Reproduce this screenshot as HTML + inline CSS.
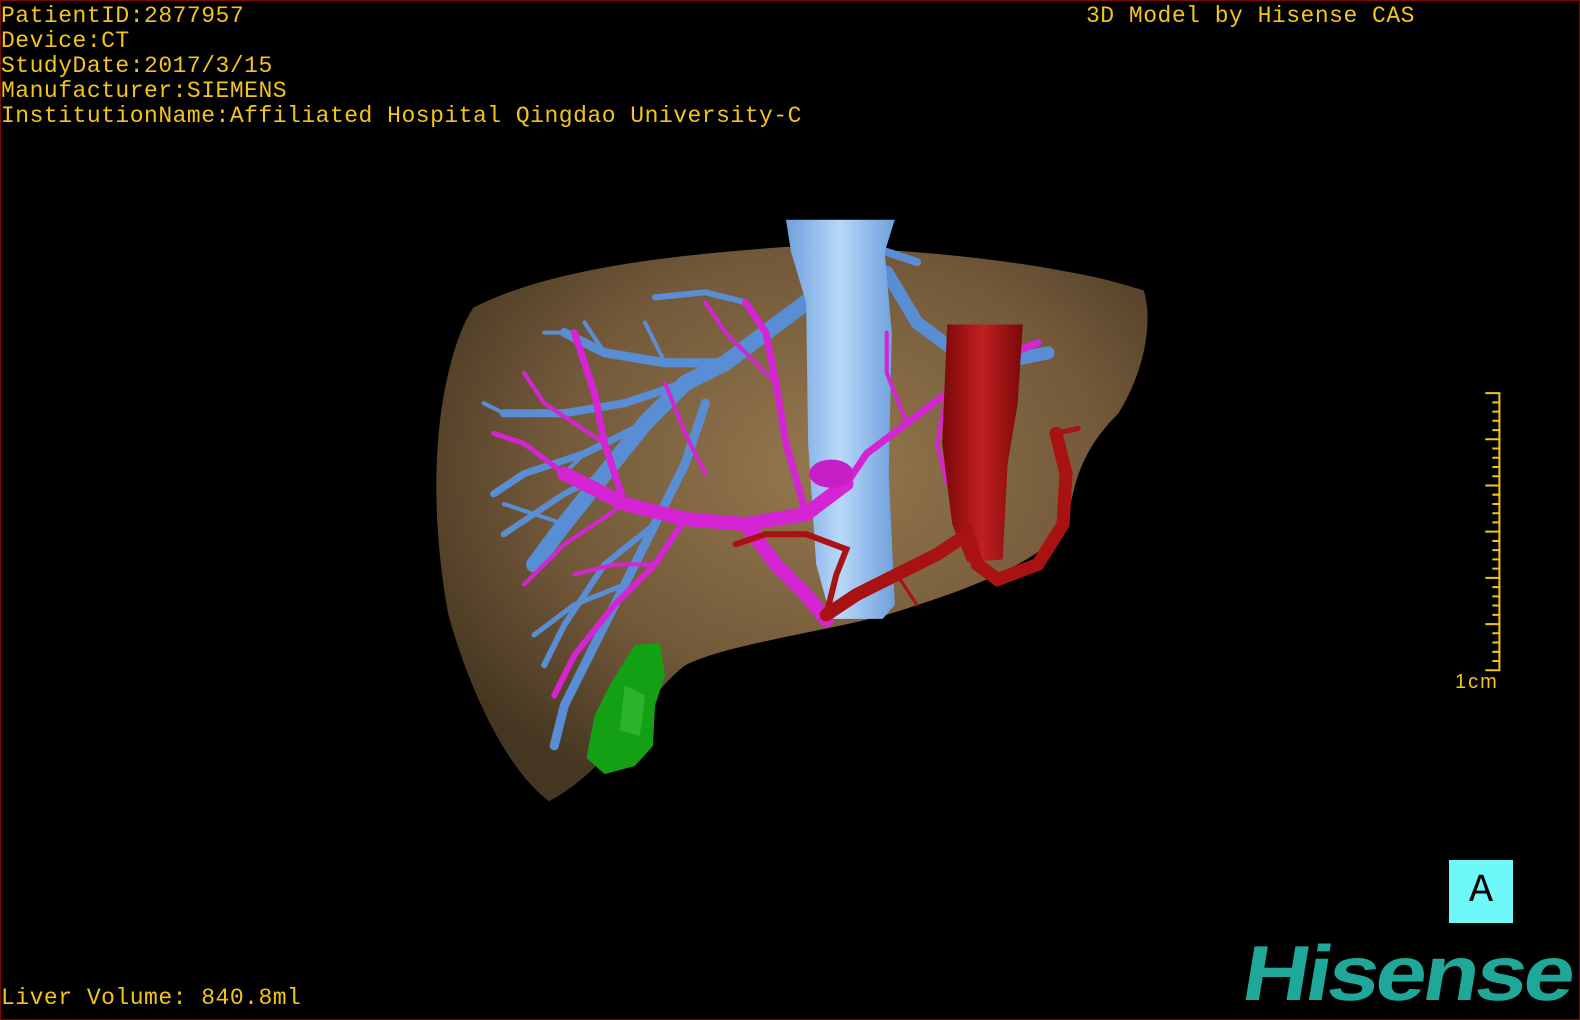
<!DOCTYPE html>
<html><head><meta charset="utf-8"><style>
html,body{margin:0;padding:0;background:#000;}
body{width:1580px;height:1020px;position:relative;overflow:hidden;}
.frame{position:absolute;left:0;top:0;width:1578px;height:1018px;border:1px solid #7a0a0a;}
.t{position:absolute;font-family:"Liberation Mono",monospace;color:#f2c41c;font-size:23px;line-height:25px;white-space:pre;letter-spacing:0.5px;}
svg{position:absolute;left:0;top:0;}
</style></head><body>
<svg width="1580" height="1020" viewBox="0 0 1568 1012" preserveAspectRatio="none">
<defs>
<radialGradient id="lg" cx="0.55" cy="0.4" r="0.65">
<stop offset="0" stop-color="#94784e"/><stop offset="0.6" stop-color="#73593a"/><stop offset="1" stop-color="#453621"/>
</radialGradient>
<linearGradient id="ivc" x1="0" x2="1"><stop offset="0" stop-color="#6f9fdc"/><stop offset="0.5" stop-color="#b8d8f8"/><stop offset="1" stop-color="#6f9fdc"/></linearGradient>
<linearGradient id="ao" x1="0" x2="1"><stop offset="0" stop-color="#7a0808"/><stop offset="0.5" stop-color="#c02020"/><stop offset="1" stop-color="#7a0808"/></linearGradient>
</defs>
<path d="M470,305 C540,270 640,255 780,245 C880,245 1000,255 1100,278 L1135,288 C1145,320 1135,370 1110,410 C1080,440 1065,470 1060,520 C1030,560 960,585 880,610 C800,630 720,640 680,660 C640,690 610,760 545,795 C510,770 470,700 445,610 C430,530 428,440 445,370 C452,340 460,320 470,305 Z" fill="url(#lg)"/>
<g fill="none" stroke="#5a8ed4" stroke-linecap="round">
<path d="M800,300 L760,330 L720,360 L680,380 L640,420 L600,470 L560,520 L530,560" stroke-width="16"/>
<path d="M720,360 L660,360 L600,350 L560,330" stroke-width="9"/>
<path d="M680,380 L620,400 L560,410 L500,410" stroke-width="8"/>
<path d="M640,420 L580,450 L520,470 L490,490" stroke-width="7"/>
<path d="M600,470 L560,490 L500,530" stroke-width="6"/>
<path d="M700,400 L680,460 L650,520 L620,580 L590,640 L560,700 L550,740" stroke-width="9"/>
<path d="M650,520 L600,560 L560,620 L540,660" stroke-width="6"/>
<path d="M760,330 L740,300 L700,290 L650,295" stroke-width="6"/>
<path d="M620,580 L570,600 L530,630" stroke-width="5"/>
<path d="M880,270 L910,320 L950,350 L990,360 L1040,350" stroke-width="13"/>
<path d="M950,350 L970,400 L960,440" stroke-width="7"/>
<path d="M880,250 L910,260" stroke-width="8"/>
<path d="M560,330 L540,330 M500,410 L480,400 M560,520 L500,500 M580,450 L560,470 M660,360 L640,320 M600,350 L580,320" stroke-width="4"/>
</g>
<path d="M780,218 L888,218 L878,250 L885,330 L882,470 L888,600 L876,614 L825,614 L810,560 L802,440 L800,300 L785,250 Z" fill="url(#ivc)"/>
<g fill="none" stroke="#d424d4" stroke-linecap="round">
<path d="M560,470 L620,500 L680,515 L740,520 L800,510 L840,480" stroke-width="14"/>
<path d="M740,520 L770,560 L800,590 L820,615" stroke-width="14"/>
<path d="M840,480 L860,450 L900,420 L940,390 L980,360 L1030,340" stroke-width="7"/>
<path d="M800,510 L780,440 L770,380 L760,330 L740,300" stroke-width="7"/>
<path d="M620,500 L600,440 L590,390 L570,330" stroke-width="7"/>
<path d="M680,515 L650,560 L610,600 L570,650 L550,690" stroke-width="6"/>
<path d="M560,470 L520,440 L490,430" stroke-width="5"/>
<path d="M600,440 L540,400 L520,370" stroke-width="4"/>
<path d="M620,500 L560,540 L520,580" stroke-width="4"/>
<path d="M770,380 L720,330 L700,300" stroke-width="4"/>
<path d="M900,420 L880,370 L880,330" stroke-width="4"/>
<path d="M940,390 L930,440 L940,480" stroke-width="4"/>
<path d="M650,560 L610,560 L570,570" stroke-width="4"/>
<path d="M700,470 L680,430 L660,380" stroke-width="4"/>
</g>
<ellipse cx="825" cy="470" rx="22" ry="14" fill="#c81ec8"/>
<path d="M940,322 L1015,322 L1010,400 L1000,460 L995,555 L960,558 L945,520 L935,440 Z" fill="url(#ao)"/>
<g fill="none" stroke="#a81212" stroke-linecap="round">
<path d="M820,610 L850,590 L890,570 L930,550 L960,530 L970,560 L990,575 L1030,560 L1055,520 L1058,470 L1048,430" stroke-width="13"/>
<path d="M820,610 L830,570 L840,545 L800,530 L760,530 L730,540" stroke-width="6"/>
<path d="M890,570 L910,600" stroke-width="3"/>
<path d="M1048,430 L1070,425" stroke-width="5"/>
</g>
<path d="M630,640 L655,638 L660,670 L650,700 L648,740 L630,760 L600,768 L582,752 L590,710 L605,680 Z" fill="#14a014"/>
<path d="M620,680 L640,690 L635,730 L615,725 Z" fill="#3cc03c" opacity="0.6"/>
<g stroke="#f2c41c" stroke-width="2" fill="none">
<path d="M1488,390 L1488,665"/>
<path d="M1474,390H1489 M1481,399.2H1489 M1481,408.4H1489 M1481,417.5H1489 M1481,426.7H1489 M1474,435.8H1489 M1481,445H1489 M1481,454.2H1489 M1481,463.3H1489 M1481,472.5H1489 M1474,481.7H1489 M1481,490.8H1489 M1481,500H1489 M1481,509.2H1489 M1481,518.3H1489 M1474,527.5H1489 M1481,536.7H1489 M1481,545.8H1489 M1481,555H1489 M1481,564.2H1489 M1474,573.3H1489 M1481,582.5H1489 M1481,591.7H1489 M1481,600.8H1489 M1481,610H1489 M1474,619.2H1489 M1481,628.3H1489 M1481,637.5H1489 M1481,646.7H1489 M1481,655.8H1489 M1474,665H1489"/>
</g>
</svg>
<div class="frame"></div>
<div class="t" style="left:1px;top:4px">PatientID:2877957
Device:CT
StudyDate:2017/3/15
Manufacturer:SIEMENS
InstitutionName:Affiliated Hospital Qingdao University-C</div>
<div class="t" style="left:1086px;top:4px">3D Model by Hisense CAS</div>
<div class="t" style="left:1px;top:986px">Liver Volume: 840.8ml</div>
<div style="position:absolute;left:1455px;top:671px;font-family:'Liberation Sans',sans-serif;font-size:20px;color:#f2c41c;letter-spacing:2px">1cm</div>
<div style="position:absolute;left:1449px;top:860px;width:64px;height:63px;background:#6ef8f8;color:#000;font-family:'Liberation Mono',monospace;font-size:40px;line-height:63px;text-align:center">A</div>
<div style="position:absolute;left:1244px;top:933px;font-family:'Liberation Sans',sans-serif;font-weight:bold;font-size:78px;line-height:80px;color:#1fa89a;letter-spacing:-3px;transform:scaleX(1.18) skewX(-8deg);transform-origin:left">Hisense</div>
</body></html>
